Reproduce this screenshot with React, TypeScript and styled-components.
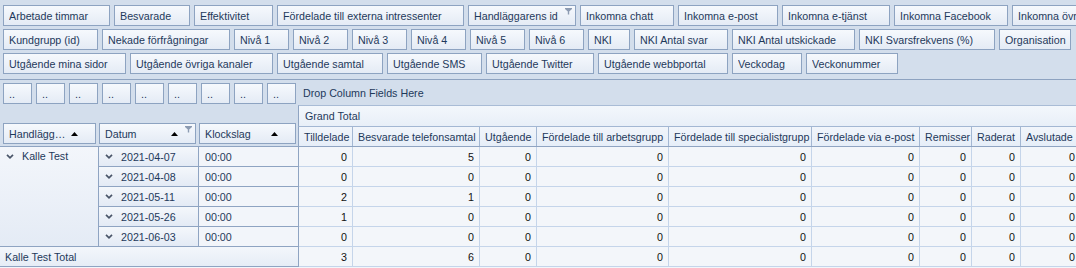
import React from "react";
import styled, { createGlobalStyle } from "styled-components";

const Global = createGlobalStyle`
  html, body { margin: 0; padding: 0; overflow: hidden; background: #D3DEEC; }
  body {
    width: 1076px; height: 268px;
    font-family: "Liberation Sans", Arial, sans-serif;
    font-size: 10.7px;
    color: #1E395B;
  }
`;

const Pivot = styled.div`
  width: 1076px;
  height: 268px;
  overflow: hidden;
  background: #F3F6FA;
`;

const FilterArea = styled.div`
  background: #D3DEEC;
  border-bottom: 1px solid #8DA2C0;
  padding: 5px 0 5px 3px;
  display: flex;
  flex-direction: column;
  gap: 3px;
`;

const FieldRow = styled.div<{ $gap?: number }>`
  display: flex;
  gap: ${(p) => p.$gap ?? 4}px;
  height: 21px;
  white-space: nowrap;
`;

const FieldButton = styled.div<{ $w: number }>`
  position: relative;
  flex: 0 0 ${(p) => p.$w}px;
  height: 21px;
  box-sizing: border-box;
  border: 1px solid #8DA3C1;
  background: linear-gradient(#F6F9FD, #E4EBF5);
  padding: 0 0 0 5px;
  display: flex;
  align-items: center;
  white-space: nowrap;
  overflow: hidden;
  color: #1E395B;
`;

const Label = styled.span`
  flex: 1 1 auto;
  overflow: hidden;
  white-space: nowrap;
`;

const SortArrow = styled.svg`
  flex: 0 0 auto;
  margin-right: 17px;
`;

const FilterMark = styled.svg`
  position: absolute;
  top: 2px;
  right: 3px;
`;

const HeaderZone = styled.div`
  display: flex;
  background: #D3DEEC;
`;

const LeftHeader = styled.div`
  flex: 0 0 298px;
  box-sizing: border-box;
  height: 67px;
  padding: 3px 0 2px 3px;
  border-bottom: 1px solid #8FA4C2;
  display: flex;
  flex-direction: column;
  justify-content: space-between;
`;

const RightHeader = styled.div`
  flex: 1 1 auto;
  display: flex;
  flex-direction: column;
  min-width: 0;
`;

const DropHint = styled.div`
  height: 25px;
  padding-left: 5px;
  display: flex;
  align-items: center;
  color: #1E395B;
`;

const GrandTotal = styled.div`
  height: 22px;
  box-sizing: border-box;
  border-top: 1px solid #A9BCD6;
  border-left: 1px solid #8FA4C2;
  border-bottom: 1px solid #A3B7D3;
  background: linear-gradient(#F3F7FC, #E8EFF8);
  padding-left: 6px;
  display: flex;
  align-items: center;
`;

const ColumnHeaderRow = styled.div`
  display: flex;
  height: 20px;
  box-sizing: border-box;
  border-left: 1px solid #8FA4C2;
  border-bottom: 1px solid #8FA4C2;
  background: linear-gradient(#F1F5FB, #E6EEF8);
  white-space: nowrap;
`;

const ColumnHeader = styled.div<{ $w: number }>`
  flex: 0 0 ${(p) => p.$w}px;
  box-sizing: border-box;
  border-right: 1px solid #A3B7D3;
  padding-left: 5px;
  display: flex;
  align-items: center;
  overflow: hidden;
`;

const BodyGrid = styled.div`
  display: grid;
  grid-template-columns: 99px 100px 100px 54px 127px 57px 132px 143px 108px 52px 49px 60px;
  grid-auto-rows: 20px;
`;

const GroupCell = styled.div<{ $span: number }>`
  grid-row: span ${(p) => p.$span};
  box-sizing: border-box;
  border-right: 1px solid #8FA4C2;
  border-bottom: 1px solid #8FA4C2;
  background: linear-gradient(#F3F6FB, #E4EBF5);
  padding: 3px 0 0 6px;
  display: flex;
  align-items: flex-start;
  gap: 8px;
  line-height: 13px;
  white-space: nowrap;
`;

const DateCell = styled.div`
  box-sizing: border-box;
  border-right: 1px solid #8FA4C2;
  border-bottom: 1px solid #8FA4C2;
  background: linear-gradient(#F4F7FB, #E3EAF5);
  padding-left: 6px;
  display: flex;
  align-items: center;
  gap: 8px;
  white-space: nowrap;
`;

const TimeCell = styled.div`
  box-sizing: border-box;
  border-right: 1px solid #8FA4C2;
  border-bottom: 1px solid #8FA4C2;
  background: #F2F5FA;
  padding-left: 6px;
  display: flex;
  align-items: center;
`;

const TotalLabel = styled.div`
  grid-column: 1 / span 3;
  box-sizing: border-box;
  border-right: 1px solid #8FA4C2;
  border-bottom: 1px solid #8FA4C2;
  background: linear-gradient(#F3F6FB, #E6EDF6);
  padding-left: 5px;
  display: flex;
  align-items: center;
`;

const ValueCell = styled.div`
  box-sizing: border-box;
  border-right: 1px solid #C5D5EA;
  border-bottom: 1px solid #C5D5EA;
  background: #F3F6FA;
  padding-right: 5px;
  display: flex;
  align-items: center;
  justify-content: flex-end;
  color: #111;
`;

const Chevron = () => (
  <svg width="8" height="5" viewBox="0 0 8 5" style={{ flex: "0 0 auto" }}>
    <path d="M1 0.8 L4 3.8 L7 0.8" stroke="#4A5669" strokeWidth="1.7" fill="none" />
  </svg>
);

const Arrow = () => (
  <SortArrow width="7" height="4" viewBox="0 0 7 4">
    <path d="M0 4 L3.5 0 L7 4 Z" fill="#000" />
  </SortArrow>
);

const Funnel = () => (
  <FilterMark width="7" height="7" viewBox="0 0 7 7">
    <path d="M0 0 H7 V1 L4.2 3.6 V6.5 H2.8 V3.6 L0 1 Z" fill="#8C9BB2" />
  </FilterMark>
);

type F = [string, number, boolean?];

const row1: F[] = [
  ["Arbetade timmar", 107],
  ["Besvarade", 76],
  ["Effektivitet", 79],
  ["Fördelade till externa intressenter", 187],
  ["Handläggarens id", 108, true],
  ["Inkomna chatt", 94],
  ["Inkomna e-post", 100],
  ["Inkomna e-tjänst", 108],
  ["Inkomna Facebook", 114],
  ["Inkomna övriga kanaler", 140],
];
const row2: F[] = [
  ["Kundgrupp (id)", 95],
  ["Nekade förfrågningar", 128],
  ["Nivå 1", 55],
  ["Nivå 2", 55],
  ["Nivå 3", 55],
  ["Nivå 4", 55],
  ["Nivå 5", 55],
  ["Nivå 6", 55],
  ["NKI", 42],
  ["NKI Antal svar", 94],
  ["NKI Antal utskickade", 123],
  ["NKI Svarsfrekvens (%)", 136],
  ["Organisation", 72],
];
const row3: F[] = [
  ["Utgående mina sidor", 123],
  ["Utgående övriga kanaler", 143],
  ["Utgående samtal", 106],
  ["Utgående SMS", 95],
  ["Utgående Twitter", 108],
  ["Utgående webbportal", 130],
  ["Veckodag", 70],
  ["Veckonummer", 92],
];

const columns: [string, number][] = [
  ["Tilldelade", 54],
  ["Besvarade telefonsamtal", 127],
  ["Utgående", 57],
  ["Fördelade till arbetsgrupp", 132],
  ["Fördelade till specialistgrupp", 143],
  ["Fördelade via e-post", 108],
  ["Remisser", 52],
  ["Raderat", 49],
  ["Avslutade", 60],
];

const rows: [string, number, number][] = [
  ["2021-04-07", 0, 5],
  ["2021-04-08", 0, 0],
  ["2021-05-11", 2, 1],
  ["2021-05-26", 1, 0],
  ["2021-06-03", 0, 0],
];

const renderFields = (list: F[]) =>
  list.map(([name, w, filtered]) => (
    <FieldButton key={name} $w={w}>
      <Label>{name}</Label>
      {filtered && <Funnel />}
    </FieldButton>
  ));

const Values = ({ a, b }: { a: number; b: number }) => (
  <>
    <ValueCell>{a}</ValueCell>
    <ValueCell>{b}</ValueCell>
    {Array.from({ length: 7 }).map((_, i) => (
      <ValueCell key={i}>0</ValueCell>
    ))}
  </>
);

export default function App() {
  return (
    <Pivot>
      <Global />
      <FilterArea>
        <FieldRow>{renderFields(row1)}</FieldRow>
        <FieldRow>{renderFields(row2)}</FieldRow>
        <FieldRow>{renderFields(row3)}</FieldRow>
      </FilterArea>
      <HeaderZone>
        <LeftHeader>
          <FieldRow>
            {Array.from({ length: 9 }).map((_, i) => (
              <FieldButton key={i} $w={29}>
                <Label>..</Label>
              </FieldButton>
            ))}
          </FieldRow>
          <FieldRow $gap={3}>
            <FieldButton $w={93}>
              <Label>Handlägg…</Label>
              <Arrow />
            </FieldButton>
            <FieldButton $w={97}>
              <Label>Datum</Label>
              <Arrow />
              <Funnel />
            </FieldButton>
            <FieldButton $w={97}>
              <Label>Klockslag</Label>
              <Arrow />
            </FieldButton>
          </FieldRow>
        </LeftHeader>
        <RightHeader>
          <DropHint>Drop Column Fields Here</DropHint>
          <GrandTotal>Grand Total</GrandTotal>
          <ColumnHeaderRow>
            {columns.map(([name, w]) => (
              <ColumnHeader key={name} $w={w}>
                {name}
              </ColumnHeader>
            ))}
          </ColumnHeaderRow>
        </RightHeader>
      </HeaderZone>
      <BodyGrid>
        <GroupCell $span={5}>
          <span style={{ marginTop: 4, display: "flex" }}>
            <Chevron />
          </span>
          <span>Kalle Test</span>
        </GroupCell>
        {rows.map(([date, a, b], i) => (
          <React.Fragment key={date}>
            <DateCell style={{ gridRow: i + 1, gridColumn: 2 }}>
              <Chevron />
              <span>{date}</span>
            </DateCell>
            <TimeCell style={{ gridRow: i + 1, gridColumn: 3 }}>00:00</TimeCell>
            <Values a={a} b={b} />
          </React.Fragment>
        ))}
        <TotalLabel>Kalle Test Total</TotalLabel>
        <Values a={3} b={6} />
      </BodyGrid>
    </Pivot>
  );
}
